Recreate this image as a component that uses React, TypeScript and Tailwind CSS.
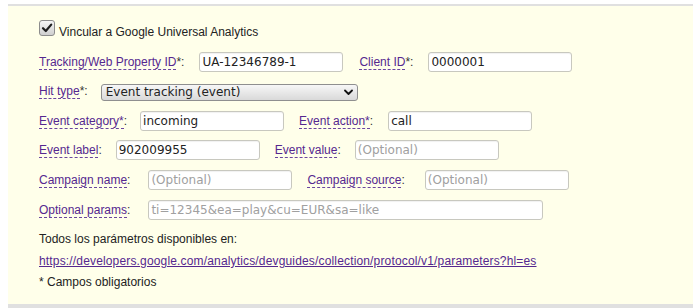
import React from "react";

const lbl = "text-[#55278f] border-b border-dashed border-[#6a45a0]";

function Field({
  value,
  placeholder,
  wide,
  className,
}: {
  value?: string;
  placeholder?: string;
  wide?: boolean;
  className: string;
}) {
  return (
    <input
      readOnly
      value={value ?? ""}
      placeholder={placeholder}
      className={`${className} ${wide ? "w-[395px]" : "w-[144px]"} h-[20px] box-border rounded-[3px] border border-[#c8c8bf] bg-white px-[2px] font-['DejaVu_Sans',sans-serif] text-[12px] text-[#222] placeholder:text-[#a0a0a0] shadow-[inset_0_1px_1px_rgba(0,0,0,0.06)] outline-none`}
    />
  );
}

export default function App() {
  return (
    <div className="w-[693px] h-[308px] bg-white overflow-hidden font-['Liberation_Sans',Arial,sans-serif] text-[12px] leading-[14px] text-[#333]">
      <div className="mt-[4px] ml-[8px] h-[304px] border-t-2 border-b-4 border-[#e0e0e0] bg-[#ffffea] pl-[31px] pt-[14px] flex flex-col">
        {/* checkbox row */}
        <div className="flex items-start h-[16px]">
          <span className="w-[16px] h-[16px] box-border rounded-[3px] border border-[#8c8c8c] bg-gradient-to-b from-[#f6f6f6] to-[#cfcfcf] flex items-center justify-center">
            <svg width="12" height="12" viewBox="0 0 12 12">
              <path d="M2 6.2 L4.8 9 L10.2 2.6" fill="none" stroke="#1e1e1e" strokeWidth="2.2" strokeLinecap="round" strokeLinejoin="round" />
            </svg>
          </span>
          <span className="ml-[4px] mt-[5px] text-[#222]">Vincular a Google Universal Analytics</span>
        </div>

        {/* Tracking row */}
        <div className="flex items-center h-[20px] mt-[16px]">
          <span>
            <span className={lbl}>Tracking/Web Property ID</span>*:
          </span>
          <Field className="ml-[15px]" value="UA-12346789-1" />
          <span className="ml-[16px]">
            <span className={lbl}>Client ID</span>*:
          </span>
          <Field className="ml-[15px]" value="0000001" />
        </div>

        {/* Hit type */}
        <div className="flex items-center h-[17px] mt-[12px]">
          <span className="-mt-[3px]">
            <span className={lbl}>Hit type</span>*:
          </span>
          <div className="ml-[13px] w-[257px] h-[17px] box-border rounded-[3px] border border-[#8f8f8f] bg-gradient-to-b from-[#f7f7f7] to-[#d9d9d9] flex items-center justify-between pl-[4px] pr-[4px] font-['DejaVu_Sans',sans-serif] text-[12px] text-[#222]">
            <span className="-mt-[2px]">Event tracking (event)</span>
            <svg width="9" height="7" viewBox="0 0 9 7">
              <path d="M1 1.5 L4.5 5 L8 1.5" fill="none" stroke="#111" strokeWidth="1.8" strokeLinecap="round" strokeLinejoin="round" />
            </svg>
          </div>
        </div>

        {/* Event category */}
        <div className="flex items-center h-[20px] mt-[10px]">
          <span>
            <span className={lbl}>Event category*</span>:
          </span>
          <Field className="ml-[13px]" value="incoming" />
          <span className="ml-[15px]">
            <span className={lbl}>Event action*</span>:
          </span>
          <Field className="ml-[15px]" value="call" />
        </div>

        {/* Event label */}
        <div className="flex items-center h-[20px] mt-[9px]">
          <span>
            <span className={lbl}>Event label</span>:
          </span>
          <Field className="ml-[14px]" value="902009955" />
          <span className="ml-[15px]">
            <span className={lbl}>Event value</span>:
          </span>
          <Field className="ml-[14px]" placeholder="(Optional)" />
        </div>

        {/* Campaign */}
        <div className="flex items-center h-[20px] mt-[10px]">
          <span>
            <span className={lbl}>Campaign name</span>:
          </span>
          <Field className="ml-[18px]" placeholder="(Optional)" />
          <span className="ml-[15px]">
            <span className={lbl}>Campaign source</span>:
          </span>
          <Field className="ml-[20px]" placeholder="(Optional)" />
        </div>

        {/* Optional params */}
        <div className="flex items-center h-[20px] mt-[10px]">
          <span>
            <span className={lbl}>Optional params</span>:
          </span>
          <Field className="ml-[18px]" wide placeholder="ti=12345&ea=play&cu=EUR&sa=like" />
        </div>

        <div className="mt-[12px] text-[#222]">Todos los parámetros disponibles en:</div>
        <a
          href="#"
          className="mt-[8px] self-start text-[#55278f] underline underline-offset-[1px] tracking-[0.16px]"
        >
          https://developers.google.com/analytics/devguides/collection/protocol/v1/parameters?hl=es
        </a>
        <div className="mt-[7px] text-[#222]">* Campos obligatorios</div>
      </div>
    </div>
  );
}
